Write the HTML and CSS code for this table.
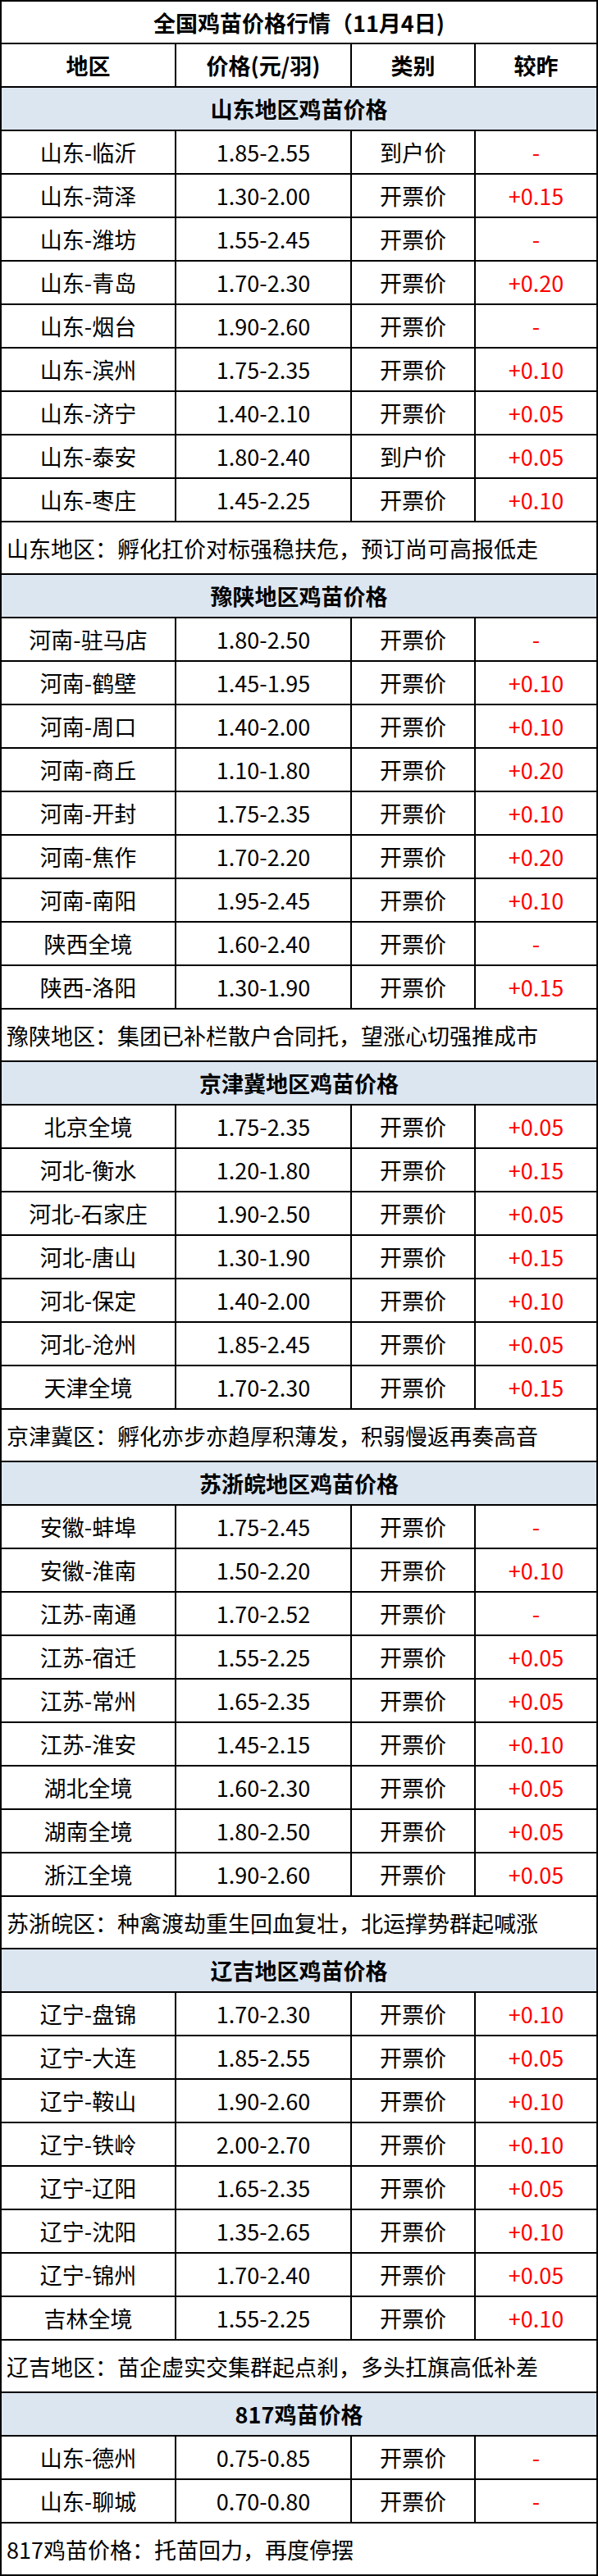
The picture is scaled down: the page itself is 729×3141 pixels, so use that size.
FILE: index.html
```html
<!DOCTYPE html>
<html lang="zh-CN">
<head>
<meta charset="utf-8">
<title>全国鸡苗价格行情</title>
<link rel="stylesheet" href="styles.css">
</head>
<body>
<div class="sheet">
  <div class="row title">全国鸡苗价格行情（11月4日)</div>
  <div class="row grid head">
    <div class="cell">地区</div><div class="cell">价格(元/羽)</div><div class="cell">类别</div><div class="cell">较昨</div>
  </div>

  <div class="row section">山东地区鸡苗价格</div>
  <div class="row grid"><div class="cell">山东-临沂</div><div class="cell">1.85-2.55</div><div class="cell">到户价</div><div class="cell up">-</div></div>
  <div class="row grid"><div class="cell">山东-菏泽</div><div class="cell">1.30-2.00</div><div class="cell">开票价</div><div class="cell up">+0.15</div></div>
  <div class="row grid"><div class="cell">山东-潍坊</div><div class="cell">1.55-2.45</div><div class="cell">开票价</div><div class="cell up">-</div></div>
  <div class="row grid"><div class="cell">山东-青岛</div><div class="cell">1.70-2.30</div><div class="cell">开票价</div><div class="cell up">+0.20</div></div>
  <div class="row grid"><div class="cell">山东-烟台</div><div class="cell">1.90-2.60</div><div class="cell">开票价</div><div class="cell up">-</div></div>
  <div class="row grid"><div class="cell">山东-滨州</div><div class="cell">1.75-2.35</div><div class="cell">开票价</div><div class="cell up">+0.10</div></div>
  <div class="row grid"><div class="cell">山东-济宁</div><div class="cell">1.40-2.10</div><div class="cell">开票价</div><div class="cell up">+0.05</div></div>
  <div class="row grid"><div class="cell">山东-泰安</div><div class="cell">1.80-2.40</div><div class="cell">到户价</div><div class="cell up">+0.05</div></div>
  <div class="row grid"><div class="cell">山东-枣庄</div><div class="cell">1.45-2.25</div><div class="cell">开票价</div><div class="cell up">+0.10</div></div>
  <div class="row note">山东地区：孵化扛价对标强稳扶危，预订尚可高报低走</div>

  <div class="row section">豫陕地区鸡苗价格</div>
  <div class="row grid"><div class="cell">河南-驻马店</div><div class="cell">1.80-2.50</div><div class="cell">开票价</div><div class="cell up">-</div></div>
  <div class="row grid"><div class="cell">河南-鹤壁</div><div class="cell">1.45-1.95</div><div class="cell">开票价</div><div class="cell up">+0.10</div></div>
  <div class="row grid"><div class="cell">河南-周口</div><div class="cell">1.40-2.00</div><div class="cell">开票价</div><div class="cell up">+0.10</div></div>
  <div class="row grid"><div class="cell">河南-商丘</div><div class="cell">1.10-1.80</div><div class="cell">开票价</div><div class="cell up">+0.20</div></div>
  <div class="row grid"><div class="cell">河南-开封</div><div class="cell">1.75-2.35</div><div class="cell">开票价</div><div class="cell up">+0.10</div></div>
  <div class="row grid"><div class="cell">河南-焦作</div><div class="cell">1.70-2.20</div><div class="cell">开票价</div><div class="cell up">+0.20</div></div>
  <div class="row grid"><div class="cell">河南-南阳</div><div class="cell">1.95-2.45</div><div class="cell">开票价</div><div class="cell up">+0.10</div></div>
  <div class="row grid"><div class="cell">陕西全境</div><div class="cell">1.60-2.40</div><div class="cell">开票价</div><div class="cell up">-</div></div>
  <div class="row grid"><div class="cell">陕西-洛阳</div><div class="cell">1.30-1.90</div><div class="cell">开票价</div><div class="cell up">+0.15</div></div>
  <div class="row note">豫陕地区：集团已补栏散户合同托，望涨心切强推成市</div>

  <div class="row section">京津冀地区鸡苗价格</div>
  <div class="row grid"><div class="cell">北京全境</div><div class="cell">1.75-2.35</div><div class="cell">开票价</div><div class="cell up">+0.05</div></div>
  <div class="row grid"><div class="cell">河北-衡水</div><div class="cell">1.20-1.80</div><div class="cell">开票价</div><div class="cell up">+0.15</div></div>
  <div class="row grid"><div class="cell">河北-石家庄</div><div class="cell">1.90-2.50</div><div class="cell">开票价</div><div class="cell up">+0.05</div></div>
  <div class="row grid"><div class="cell">河北-唐山</div><div class="cell">1.30-1.90</div><div class="cell">开票价</div><div class="cell up">+0.15</div></div>
  <div class="row grid"><div class="cell">河北-保定</div><div class="cell">1.40-2.00</div><div class="cell">开票价</div><div class="cell up">+0.10</div></div>
  <div class="row grid"><div class="cell">河北-沧州</div><div class="cell">1.85-2.45</div><div class="cell">开票价</div><div class="cell up">+0.05</div></div>
  <div class="row grid"><div class="cell">天津全境</div><div class="cell">1.70-2.30</div><div class="cell">开票价</div><div class="cell up">+0.15</div></div>
  <div class="row note">京津冀区：孵化亦步亦趋厚积薄发，积弱慢返再奏高音</div>

  <div class="row section">苏浙皖地区鸡苗价格</div>
  <div class="row grid"><div class="cell">安徽-蚌埠</div><div class="cell">1.75-2.45</div><div class="cell">开票价</div><div class="cell up">-</div></div>
  <div class="row grid"><div class="cell">安徽-淮南</div><div class="cell">1.50-2.20</div><div class="cell">开票价</div><div class="cell up">+0.10</div></div>
  <div class="row grid"><div class="cell">江苏-南通</div><div class="cell">1.70-2.52</div><div class="cell">开票价</div><div class="cell up">-</div></div>
  <div class="row grid"><div class="cell">江苏-宿迁</div><div class="cell">1.55-2.25</div><div class="cell">开票价</div><div class="cell up">+0.05</div></div>
  <div class="row grid"><div class="cell">江苏-常州</div><div class="cell">1.65-2.35</div><div class="cell">开票价</div><div class="cell up">+0.05</div></div>
  <div class="row grid"><div class="cell">江苏-淮安</div><div class="cell">1.45-2.15</div><div class="cell">开票价</div><div class="cell up">+0.10</div></div>
  <div class="row grid"><div class="cell">湖北全境</div><div class="cell">1.60-2.30</div><div class="cell">开票价</div><div class="cell up">+0.05</div></div>
  <div class="row grid"><div class="cell">湖南全境</div><div class="cell">1.80-2.50</div><div class="cell">开票价</div><div class="cell up">+0.05</div></div>
  <div class="row grid"><div class="cell">浙江全境</div><div class="cell">1.90-2.60</div><div class="cell">开票价</div><div class="cell up">+0.05</div></div>
  <div class="row note">苏浙皖区：种禽渡劫重生回血复壮，北运撑势群起喊涨</div>

  <div class="row section">辽吉地区鸡苗价格</div>
  <div class="row grid"><div class="cell">辽宁-盘锦</div><div class="cell">1.70-2.30</div><div class="cell">开票价</div><div class="cell up">+0.10</div></div>
  <div class="row grid"><div class="cell">辽宁-大连</div><div class="cell">1.85-2.55</div><div class="cell">开票价</div><div class="cell up">+0.05</div></div>
  <div class="row grid"><div class="cell">辽宁-鞍山</div><div class="cell">1.90-2.60</div><div class="cell">开票价</div><div class="cell up">+0.10</div></div>
  <div class="row grid"><div class="cell">辽宁-铁岭</div><div class="cell">2.00-2.70</div><div class="cell">开票价</div><div class="cell up">+0.10</div></div>
  <div class="row grid"><div class="cell">辽宁-辽阳</div><div class="cell">1.65-2.35</div><div class="cell">开票价</div><div class="cell up">+0.05</div></div>
  <div class="row grid"><div class="cell">辽宁-沈阳</div><div class="cell">1.35-2.65</div><div class="cell">开票价</div><div class="cell up">+0.10</div></div>
  <div class="row grid"><div class="cell">辽宁-锦州</div><div class="cell">1.70-2.40</div><div class="cell">开票价</div><div class="cell up">+0.05</div></div>
  <div class="row grid"><div class="cell">吉林全境</div><div class="cell">1.55-2.25</div><div class="cell">开票价</div><div class="cell up">+0.10</div></div>
  <div class="row note">辽吉地区：苗企虚实交集群起点刹，多头扛旗高低补差</div>

  <div class="row section">817鸡苗价格</div>
  <div class="row grid"><div class="cell">山东-德州</div><div class="cell">0.75-0.85</div><div class="cell">开票价</div><div class="cell up">-</div></div>
  <div class="row grid"><div class="cell">山东-聊城</div><div class="cell">0.70-0.80</div><div class="cell">开票价</div><div class="cell up">-</div></div>
  <div class="row note last">817鸡苗价格：托苗回力，再度停摆</div>
</div>
</body>
</html>
```

FILE: styles.css
```css
html, body {
  margin: 0;
  padding: 0;
  background: #ffffff;
}

.sheet {
  width: 729px;
  box-sizing: border-box;
  border: 2px solid #000000;
  font-family: "Noto Sans CJK SC", "Microsoft YaHei", sans-serif;
  font-size: 27px;
  color: #000000;
  background: #ffffff;
}

.row {
  box-sizing: border-box;
  height: 53px;
  border-bottom: 2px solid #000000;
  display: flex;
  align-items: center;
  justify-content: center;
  line-height: 1;
}

.row.title {
  height: 52px;
  font-weight: 700;
}

.row.section {
  background: #dce6f1;
  font-weight: 700;
}

.row.grid {
  display: grid;
  grid-template-columns: 213px 214px 151px 147px;
  align-items: stretch;
}

.row.head {
  font-weight: 700;
}

.cell {
  display: flex;
  align-items: center;
  justify-content: center;
  border-right: 2px solid #000000;
  white-space: nowrap;
}

.cell:last-child {
  border-right: none;
}

.cell.up {
  color: #ff0000;
}

.row.note {
  height: 64px;
  justify-content: flex-start;
  padding-left: 6px;
}

.row.note.last {
  height: 62px;
  border-bottom: none;
}
```
